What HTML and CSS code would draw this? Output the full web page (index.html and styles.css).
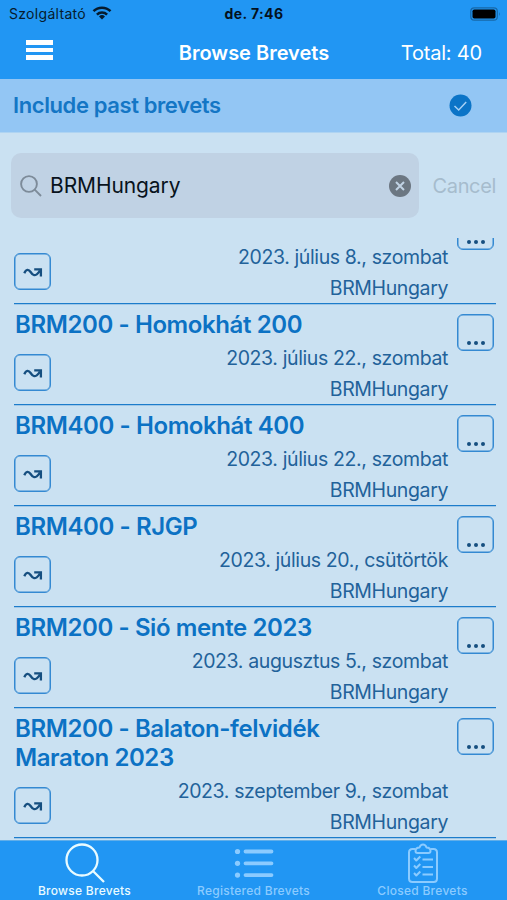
FILE: index.html
```
<!DOCTYPE html>
<html lang="hu">
<head>
<meta charset="utf-8">
<title>Browse Brevets</title>
<link rel="stylesheet" href="styles.css">
</head>
<body>
<svg class="defs" width="0" height="0" aria-hidden="true">
  <symbol id="route" viewBox="0 0 20 12"><path d="M1.300 6.200C3 2 5.600 2 7.600 5S11.800 10.800 16.800 3.800M11.200 2.400H17.900V9.600" fill="none" stroke="currentColor" stroke-width="2.300"/></symbol>
  <symbol id="dots" viewBox="0 0 20 6"><circle cx="3" cy="3" r="2"/><circle cx="10" cy="3" r="2"/><circle cx="17" cy="3" r="2"/></symbol>
</svg>
<div class="app">
  <header class="top">
    <div class="status">
      <div class="carrier"><span>Szolgáltató</span>
        <svg width="20" height="14" viewBox="0 0 20 14"><g fill="none" stroke="#061b2d" stroke-width="2.500"><path d="M1.500 5.200a12 12 0 0 1 17 0"/><path d="M4.900 8.600a7.200 7.200 0 0 1 10.200 0"/></g><path d="M10 13.500L7 10.500a4.300 4.300 0 0 1 6 0z" fill="#061b2d"/></svg>
      </div>
      <div class="clock">de. 7:46</div>
      <svg class="battery" width="31" height="14" viewBox="0 0 31 14"><rect x=".8" y=".8" width="26.500" height="12.400" rx="3.500" fill="none" stroke="#1768a8" stroke-width="1.200"/><rect x="2.500" y="2.500" width="23" height="9" rx="1.800" fill="#000"/><path d="M29 5q1.600 2 0 4z" fill="#1768a8"/></svg>
    </div>
    <div class="nav">
      <div class="menu"><i></i><i></i><i></i></div>
      <h1>Browse Brevets</h1>
      <div class="total">Total: 40</div>
    </div>
  </header>
  <div class="filter"><span>Include past brevets</span>
    <svg width="23" height="23" viewBox="0 0 23 23"><circle cx="11.500" cy="11.500" r="11" fill="#0b74c7"/><path d="M5.500 12l4.200 4 7.500-8" fill="none" stroke="#a5d0f5" stroke-width="1.500"/></svg>
  </div>
  <div class="search">
    <div class="field">
      <svg width="22" height="22" viewBox="0 0 22 22"><g fill="none" stroke="#7d8b99" stroke-width="1.900"><circle cx="9" cy="9" r="7.900"/><path d="M14.700 14.700l6.300 6.300"/></g></svg>
      <span class="query">BRMHungary</span>
      <svg class="clear" width="22" height="22" viewBox="0 0 22 22"><circle cx="11" cy="11" r="11" fill="#6c7782"/><path d="M7 7l8 8M15 7l-8 8" stroke="#c1d3e5" stroke-width="2"/></svg>
    </div>
    <span class="cancel">Cancel</span>
  </div>
  <main class="list">
    <article class="row">
      <div class="info"><h2>&nbsp;</h2><div class="meta"><span class="box"><svg width="20" height="12"><use href="#route"/></svg></span><div class="when"><p>2023. július 8., szombat</p><p>BRMHungary</p></div></div></div>
      <span class="box more"><svg width="20" height="6"><use href="#dots"/></svg></span>
    </article>
    <article class="row">
      <div class="info"><h2>BRM200 - Homokhát 200</h2><div class="meta"><span class="box"><svg width="20" height="12"><use href="#route"/></svg></span><div class="when"><p>2023. július 22., szombat</p><p>BRMHungary</p></div></div></div>
      <span class="box more"><svg width="20" height="6"><use href="#dots"/></svg></span>
    </article>
    <article class="row">
      <div class="info"><h2>BRM400 - Homokhát 400</h2><div class="meta"><span class="box"><svg width="20" height="12"><use href="#route"/></svg></span><div class="when"><p>2023. július 22., szombat</p><p>BRMHungary</p></div></div></div>
      <span class="box more"><svg width="20" height="6"><use href="#dots"/></svg></span>
    </article>
    <article class="row">
      <div class="info"><h2>BRM400 - RJGP</h2><div class="meta"><span class="box"><svg width="20" height="12"><use href="#route"/></svg></span><div class="when"><p>2023. július 20., csütörtök</p><p>BRMHungary</p></div></div></div>
      <span class="box more"><svg width="20" height="6"><use href="#dots"/></svg></span>
    </article>
    <article class="row">
      <div class="info"><h2>BRM200 - Sió mente 2023</h2><div class="meta"><span class="box"><svg width="20" height="12"><use href="#route"/></svg></span><div class="when"><p>2023. augusztus 5., szombat</p><p>BRMHungary</p></div></div></div>
      <span class="box more"><svg width="20" height="6"><use href="#dots"/></svg></span>
    </article>
    <article class="row tall">
      <div class="info"><h2>BRM200 - Balaton-felvidék<br>Maraton 2023</h2><div class="meta"><span class="box"><svg width="20" height="12"><use href="#route"/></svg></span><div class="when"><p>2023. szeptember 9., szombat</p><p>BRMHungary</p></div></div></div>
      <span class="box more"><svg width="20" height="6"><use href="#dots"/></svg></span>
    </article>
  </main>
  <footer class="tabs">
    <div class="tab active">
      <svg width="40" height="40" viewBox="0 0 40 40"><g fill="none" stroke="currentColor" stroke-width="2.300"><circle cx="17" cy="17" r="15.500"/><path d="M28 28l11 11"/></g></svg>
      <span>Browse Brevets</span>
    </div>
    <div class="tab">
      <svg width="40" height="40" viewBox="0 0 40 40"><g stroke="currentColor" stroke-width="3.800" stroke-linecap="round"><path d="M11.500 8.500H37.500M11.500 20.300H37.500M11.500 32.100H37.500"/></g><g fill="currentColor"><circle cx="3.500" cy="8.500" r="2.600"/><circle cx="3.500" cy="20.300" r="2.600"/><circle cx="3.500" cy="32.100" r="2.600"/></g></svg>
      <span>Registered Brevets</span>
    </div>
    <div class="tab">
      <svg width="40" height="40" viewBox="0 0 40 40"><g fill="none" stroke="currentColor" stroke-width="2" stroke-linejoin="round"><path d="M12.500 6H9.500q-3.500 0-3.500 3.500v26q0 3.500 3.500 3.500H30.500q3.500 0 3.500-3.500V9.500q0-3.500-3.500-3.500H27.500"/><path d="M14.500 10q-2 0-2-2 0-3.300 4-3.500 1-3 3.500-3t3.500 3q4 .2 4 3.500 0 2-2 2z"/><path d="M11 15l2.300 2.500 4-4M11 22.500l2.300 2.500 4-4M11 30l2.300 2.500 4-4M19.500 16.500h10.500M19.500 24h10.500M19.500 31.500h10.500"/></g></svg>
      <span>Closed Brevets</span>
    </div>
  </footer>
</div>
</body>
</html>
```
FILE: styles.css
```
* { box-sizing: border-box; }
body, h1, h2, p { margin: 0; font-weight: 400; }
body { font-family: Inter, sans-serif; background: #cae1f2; overflow: hidden; }
svg { display: block; flex: none; }
.defs { position: absolute; }
.app { width: 507px; height: 900px; display: flex; flex-direction: column; }
.top { height: 79px; background: #2196f3; flex: none; }
.status { height: 27px; display: grid; grid-template-columns: 1fr 1fr 1fr; align-items: center; padding: 0 6px 0 9px; font-size: 14px; line-height: 27px; color: #061b2d; }
.carrier { display: flex; align-items: center; gap: 6px; letter-spacing: .3px; }
.carrier svg { margin-bottom: 1px; }
.clock { text-align: center; font-weight: 700; color: #04111d; letter-spacing: .4px; margin-left: -2px; }
.battery { justify-self: end; }
.nav { display: grid; grid-template-columns: 1fr auto 1fr; align-items: center; height: 51px; padding: 0 25px 0 26px; color: #fff; }
.menu { display: flex; flex-direction: column; gap: 3px; width: 27px; margin-bottom: 5px; }
.menu i { height: 4.500px; background: #fff; }
h1 { font-size: 20px; font-weight: 600; letter-spacing: 0; }
.total { text-align: right; font-size: 20px; letter-spacing: -.2px; }
.filter { height: 54px; flex: none; background: #93c6f4; border-bottom: 1px solid #afd4f2; padding: 0 35px 1px 13px; display: flex; align-items: center; justify-content: space-between; font-size: 22px; font-weight: 600; color: #1476c5; letter-spacing: -.4px; }
.search { height: 105px; flex: none; display: flex; align-items: center; justify-content: space-between; padding: 0 11px; }
.field { width: 408px; height: 65px; border-radius: 10px; background: #c0d2e4; display: flex; align-items: center; padding: 0 8px 0 9px; font-size: 21px; color: #08131c; }
.query { flex: 1; margin-left: 8px; letter-spacing: -.1px; }
.cancel { font-size: 20px; color: #a6bccd; letter-spacing: -.35px; white-space: nowrap; }
.list { height: 602px; flex: none; overflow: hidden; display: flex; flex-direction: column; }
.row { flex: none; height: 101px; margin: 0 11px 0 14px; border-bottom: 1px solid #1c7ccb; box-shadow: 0 1px #9fc7e7; display: flex; padding-top: 6px; }
.row:first-child { margin-top: -35px; }
.tall { height: 130px; }
.info { width: 434px; }
h2 { font-size: 24px; line-height: 29px; font-weight: 600; color: #0c72c4; letter-spacing: -.4px; white-space: nowrap; padding-left: 1px; }
.meta { display: flex; justify-content: space-between; }
.meta .box { margin-top: 15px; }
.when { margin-top: 4px; text-align: right; font-size: 19.500px; line-height: 31px; color: #22629a; letter-spacing: -.38px; white-space: nowrap; }
.box { width: 37px; height: 37px; flex: none; border: 1px solid #3489d2; box-shadow: inset 0 0 0 .5px #3489d2; border-radius: 6px; display: flex; align-items: center; justify-content: center; color: #164f80; fill: #164f80; padding-top: 2px; }
.more { margin: 4px 0 0 9px; align-items: flex-end; padding-bottom: 4px; }
.tabs { flex: 1; background: #2196f3; border-top: 1px solid #61aee9; display: grid; grid-template-columns: repeat(3, 1fr); }
.tab { display: flex; flex-direction: column; align-items: center; padding-top: 2px; color: #8bcbff; font-size: 12px; line-height: 14px; font-weight: 500; letter-spacing: .28px; }
.tab span { margin-top: 1px; }
.active { color: #e9fbff; }
```
